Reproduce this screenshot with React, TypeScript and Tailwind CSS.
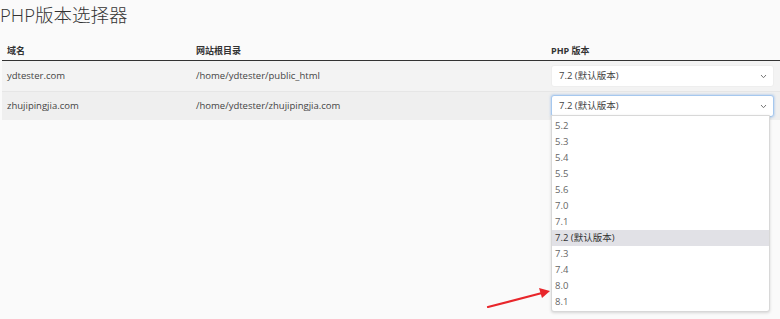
import React from "react";

const versions = ["5.2", "5.3", "5.4", "5.5", "5.6", "7.0", "7.1", "7.2 (默认版本)", "7.3", "7.4", "8.0", "8.1"];

function Chevron() {
  return (
    <svg width="7" height="5" viewBox="0 0 7 5" className="text-[#777]">
      <path d="M1 1 L3.5 3.7 L6 1" fill="none" stroke="currentColor" strokeWidth="1" />
    </svg>
  );
}

function Select({ focus }: { focus?: boolean }) {
  return (
    <div
      className={`flex h-[22px] items-center justify-between rounded-[3px] bg-white pl-[7px] pr-[6px] text-[9.5px] text-[#444] ${
        focus ? "border border-[#a6c8ee] shadow-[0_0_2px_1px_rgba(120,170,230,0.35)]" : "border border-[#eeeeee]"
      }`}
    >
      <span>7.2 (默认版本)</span>
      <Chevron />
    </div>
  );
}

export default function App() {
  return (
    <div
      className="relative h-[319px] w-[780px] overflow-hidden bg-[#fafafa] text-[#444]"
      style={{ fontFamily: '"Open Sans", "Noto Sans CJK SC", sans-serif' }}
    >
      <h1 className="pt-[1px] pl-0 text-[18.5px] font-light leading-[27px] text-[#333]">PHP版本选择器</h1>
      <div className="mt-[13px] ml-[2px] w-[778px]">
        <div className="flex h-[20px] items-center border-b-[1.5px] border-[#333] text-[9px] font-bold text-[#333]">
          <div className="w-[189px] pl-[5px]">域名</div>
          <div className="w-[355px] pl-[5px]">网站根目录</div>
          <div className="flex-1 pl-[5px]">PHP 版本</div>
        </div>
        <div className="flex h-[30px] items-center bg-[#f3f3f3] text-[9.5px]">
          <div className="w-[189px] pl-[5px]">ydtester.com</div>
          <div className="w-[355px] pl-[5px]">/home/ydtester/public_html</div>
          <div className="flex-1 pl-[5px] pr-[6px]">
            <Select />
          </div>
        </div>
        <div className="flex h-[29px] items-center border-t border-[#e6e6e6] bg-[#efefef] text-[9.5px]">
          <div className="w-[189px] pl-[5px]">zhujipingjia.com</div>
          <div className="w-[355px] pl-[5px]">/home/ydtester/zhujipingjia.com</div>
          <div className="flex-1 pl-[5px] pr-[6px]">
            <Select focus />
          </div>
        </div>
      </div>
      <div className="absolute left-[551px] top-[115px] w-[219px] rounded-b-[3px] border border-[#d8d8d8] bg-white pt-[2px] pb-[1px] shadow-[0_1px_3px_rgba(0,0,0,0.15)]">
        {versions.map((v) => (
          <div
            key={v}
            className={`flex h-[16px] items-center pl-[3px] text-[9.5px] ${
              v.startsWith("7.2") ? "bg-[#e1e1e6] text-[#333]" : "text-[#666]"
            }`}
          >
            {v}
          </div>
        ))}
      </div>
      <svg className="absolute left-[484px] top-[284px]" width="70" height="28" viewBox="0 0 70 28">
        <line x1="4" y1="23" x2="58" y2="9" stroke="#e8262b" strokeWidth="2.2" strokeLinecap="round" />
        <path d="M66 7 L55 4 L58 14 Z" fill="#e8262b" />
      </svg>
    </div>
  );
}
